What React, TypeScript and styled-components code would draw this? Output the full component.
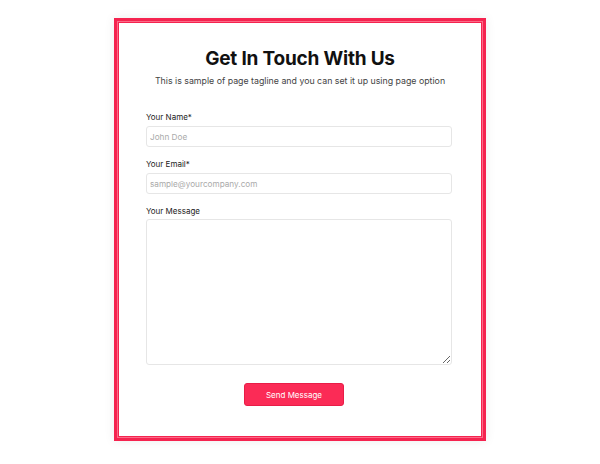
import React from 'react';
import styled, { createGlobalStyle } from 'styled-components';

const GlobalStyle = createGlobalStyle`
  html, body {
    margin: 0;
    padding: 0;
    background: #ffffff;
  }
  body {
    font-family: 'Inter', 'Noto Sans', sans-serif;
  }
  * { box-sizing: border-box; }
`;

const Page = styled.div`
  width: 600px;
  height: 464px;
  display: flex;
  justify-content: center;
  padding-top: 18px;
`;

const Card = styled.div`
  width: 372px;
  height: 423px;
  background: #fff;
  border: 3px solid #f5234f;
  box-shadow: inset 0 0 0 1px #fb6b88, inset 0 0 0 2px #f5234f, 0 0 10px rgba(0, 0, 0, 0.08);
  padding: 26px 30px 0;
  display: flex;
  flex-direction: column;
`;

const Title = styled.h1`
  margin: 0;
  font-size: 19px;
  font-weight: 700;
  color: #111;
  text-align: center;
  letter-spacing: -0.2px;
  line-height: 24px;
`;

const Tagline = styled.p`
  margin: 3px 0 0;
  font-size: 8.8px;
  color: #444;
  text-align: center;
  line-height: 14px;
  white-space: nowrap;
`;

const Form = styled.form`
  margin: 24px 1px 0 -1px;
  display: flex;
  flex-direction: column;
  gap: 12px;
`;

const Field = styled.div`
  display: flex;
  flex-direction: column;
  gap: 3px;
`;

const Label = styled.label`
  font-size: 8px;
  color: #222;
  line-height: 11px;
`;

const Input = styled.input`
  height: 21px;
  border: 1px solid #e6e6e6;
  border-radius: 3px;
  padding: 0 3px;
  font-family: inherit;
  font-size: 8.2px;
  color: #333;
  outline: none;
  &::placeholder { color: #aaa; }
`;

const TextArea = styled.textarea`
  height: 146px;
  margin-top: -1px;
  border: 1px solid #e6e6e6;
  border-radius: 3px;
  padding: 5px 3px;
  font-family: inherit;
  font-size: 8.2px;
  outline: none;
  resize: vertical;
`;

const Actions = styled.div`
  display: flex;
  justify-content: center;
  margin-top: 6px;
  padding-right: 10px;
`;

const Button = styled.button`
  width: 100px;
  height: 23px;
  background: #fb2b56;
  border: 1px solid #e81d47;
  border-radius: 3px;
  color: #fff;
  font-family: inherit;
  font-size: 8px;
  cursor: pointer;
`;

export default function App() {
  return (
    <>
      <GlobalStyle />
      <Page>
        <Card>
          <Title>Get In Touch With Us</Title>
          <Tagline>This is sample of page tagline and you can set it up using page option</Tagline>
          <Form onSubmit={(e) => e.preventDefault()}>
            <Field>
              <Label>Your Name*</Label>
              <Input placeholder="John Doe" />
            </Field>
            <Field>
              <Label>Your Email*</Label>
              <Input placeholder="sample@yourcompany.com" />
            </Field>
            <Field>
              <Label>Your Message</Label>
              <TextArea />
            </Field>
            <Actions>
              <Button type="submit">Send Message</Button>
            </Actions>
          </Form>
        </Card>
      </Page>
    </>
  );
}
